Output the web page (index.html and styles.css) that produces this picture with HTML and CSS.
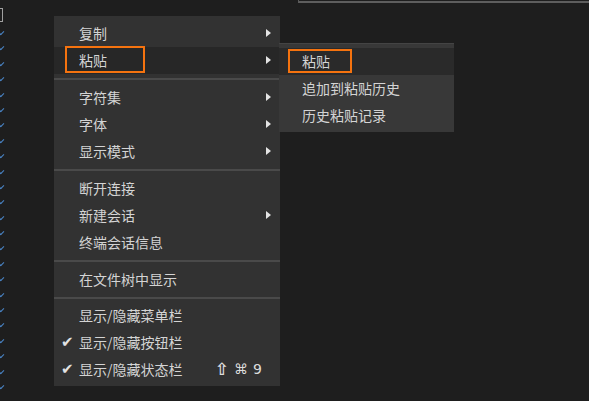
FILE: index.html
```html
<!DOCTYPE html>
<html>
<head>
<meta charset="utf-8">
<link rel="stylesheet" href="styles.css">
</head>
<body>
<div class="screen">
  <div class="gutter">
    <div class="cursor"></div>
    <div class="marks">
      <span class="mk"></span><span class="mk"></span><span class="mk"></span><span class="mk"></span>
      <span class="mk"></span><span class="mk"></span><span class="mk"></span><span class="mk"></span>
      <span class="mk"></span><span class="mk"></span><span class="mk"></span><span class="mk"></span>
      <span class="mk"></span><span class="mk"></span><span class="mk"></span><span class="mk"></span>
      <span class="mk"></span><span class="mk"></span><span class="mk"></span><span class="mk"></span>
      <span class="mk"></span><span class="mk"></span><span class="mk"></span><span class="mk"></span>
    </div>
  </div>
  <div class="topbox"></div>

  <div class="menu main">
    <div class="item"><span class="label">复制</span><span class="arrow"></span></div>
    <div class="item active"><span class="label">粘贴</span><span class="arrow"></span><span class="mark-box main-box"></span></div>
    <div class="sep"></div>
    <div class="item"><span class="label">字符集</span><span class="arrow"></span></div>
    <div class="item"><span class="label">字体</span><span class="arrow"></span></div>
    <div class="item"><span class="label">显示模式</span><span class="arrow"></span></div>
    <div class="sep"></div>
    <div class="item"><span class="label">断开连接</span></div>
    <div class="item"><span class="label">新建会话</span><span class="arrow"></span></div>
    <div class="item"><span class="label">终端会话信息</span></div>
    <div class="sep"></div>
    <div class="item"><span class="label">在文件树中显示</span></div>
    <div class="sep short"></div>
    <div class="item"><span class="label">显示/隐藏菜单栏</span></div>
    <div class="item"><span class="check">✔</span><span class="label">显示/隐藏按钮栏</span></div>
    <div class="item"><span class="check">✔</span><span class="label">显示/隐藏状态栏</span><span class="shortcut"><span class="shift">⇧</span><span class="cmd">⌘</span><span class="key">9</span></span></div>
  </div>

  <div class="menu sub">
    <div class="item active"><span class="label">粘贴</span><span class="mark-box sub-box"></span></div>
    <div class="item"><span class="label">追加到粘贴历史</span></div>
    <div class="item"><span class="label">历史粘贴记录</span></div>
  </div>
</div>
</body>
</html>
```

FILE: styles.css
```css
* { box-sizing: border-box; }
html, body {
  margin: 0;
  padding: 0;
  background: #1e1e1e;
  width: 589px;
  height: 401px;
  overflow: hidden;
}
.screen {
  position: relative;
  width: 589px;
  height: 401px;
  display: flex;
  font-family: "Noto Sans CJK SC", "DejaVu Sans", sans-serif;
}
.gutter {
  width: 4px;
  display: flex;
  flex-direction: column;
}
.cursor {
  margin-top: 8px;
  width: 3px;
  height: 14px;
  border: 1px solid #a0a0a0;
  border-left: none;
}
.marks {
  margin-top: 7px;
  display: flex;
  flex-direction: column;
}
.mk {
  display: block;
  height: 15.4px;
  position: relative;
}
.mk::before {
  content: "";
  position: absolute;
  left: -1px;
  top: 2px;
  width: 4px;
  height: 2px;
  border-left: 1.5px solid #4a86c8;
  border-bottom: 1.5px solid #4a86c8;
  transform: rotate(-45deg);
}
.topbox {
  margin-left: 294px;
  flex: 1;
  height: 3px;
  border-left: 1px solid #5a5a5a;
  border-bottom: 2px solid #5e5e5e;
}

.menu {
  position: absolute;
  color: #d4d4d4;
  font-size: 14px;
}
.main {
  left: 54px;
  top: 16px;
  width: 226px;
  background: #323232;
  padding: 4px 0 3px;
}
.sub {
  left: 279px;
  top: 43px;
  width: 175px;
  background: #383838;
  padding: 4px 0 3px;
  border-top: 1px solid #444;
}
.sub .item { padding-left: 23px; }
.item {
  position: relative;
  height: 27px;
  line-height: 27px;
  padding-left: 25px;
  display: flex;
  align-items: center;
}
.item.active { background: #272727; }
.sub .item.active { background: #2a2a2a; }
.label { white-space: nowrap; }
.arrow {
  position: absolute;
  right: 9px;
  top: 9px;
  width: 0;
  height: 0;
  border-left: 5px solid #e4e4e4;
  border-top: 4.5px solid transparent;
  border-bottom: 4.5px solid transparent;
}
.check {
  position: absolute;
  left: 7px;
  top: 0;
  font-family: "DejaVu Sans", sans-serif;
  font-size: 15px;
  color: #e2e2e2;
}
.shortcut {
  position: absolute;
  right: 18px;
  top: 0;
  height: 27px;
  display: flex;
  align-items: center;
  gap: 5px;
  font-family: "DejaVu Sans", sans-serif;
  color: #dcdcdc;
}
.shift { font-size: 17px; font-weight: bold; }
.cmd { font-size: 14px; }
.key { font-size: 14px; }
.sep {
  height: 10px;
  display: flex;
  align-items: center;
}
.sep.short { height: 9px; }
.sep::before {
  content: "";
  display: block;
  width: 100%;
  height: 2px;
  background: #4a4a4a;
}
.mark-box {
  position: absolute;
  border: 2px solid #f5730f;
}
.main-box {
  left: 11px;
  top: -1px;
  width: 80px;
  height: 27px;
}
.sub-box {
  left: 9px;
  top: 1px;
  width: 64px;
  height: 24px;
}
```
